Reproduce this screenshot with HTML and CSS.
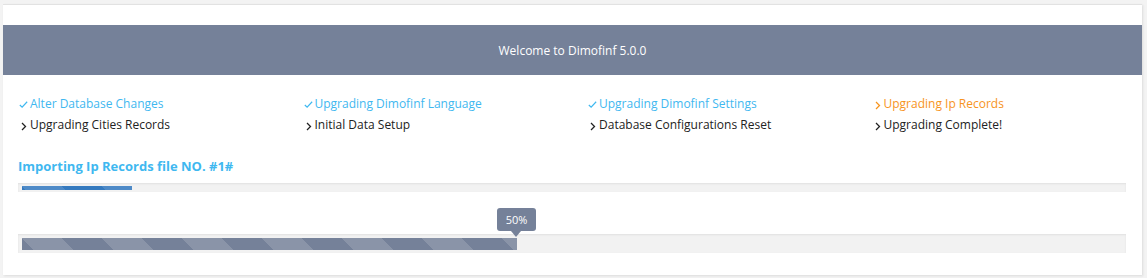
FILE: index.html
```html
<!DOCTYPE html>
<html lang="en">

<head>
    <meta charset="UTF-8">
    <title>Dimofinf Upgrade</title>
    <link rel="stylesheet" href="styles.css">
</head>

<body>
    <section class="panel">
        <header class="panel_head">
            <h2>Welcome to Dimofinf 5.0.0</h2>
        </header>

        <div class="panel_body">
            <ul class="steps">
                <li class="done"><svg class="ico" viewBox="0 0 12 12"><path d="M2 6.5 L4.5 9 L10 3"/></svg>Alter Database Changes</li>
                <li class="done"><svg class="ico" viewBox="0 0 12 12"><path d="M2 6.5 L4.5 9 L10 3"/></svg>Upgrading Dimofinf Language</li>
                <li class="done"><svg class="ico" viewBox="0 0 12 12"><path d="M2 6.5 L4.5 9 L10 3"/></svg>Upgrading Dimofinf Settings</li>
                <li class="current"><svg class="ico" viewBox="0 0 12 12"><path d="M4 3 L7.5 6.5 L4 10"/></svg>Upgrading Ip Records</li>
                <li><svg class="ico" viewBox="0 0 12 12"><path d="M4 3 L7.5 6.5 L4 10"/></svg>Upgrading Cities Records</li>
                <li><svg class="ico" viewBox="0 0 12 12"><path d="M4 3 L7.5 6.5 L4 10"/></svg>Initial Data Setup</li>
                <li><svg class="ico" viewBox="0 0 12 12"><path d="M4 3 L7.5 6.5 L4 10"/></svg>Database Configurations Reset</li>
                <li><svg class="ico" viewBox="0 0 12 12"><path d="M4 3 L7.5 6.5 L4 10"/></svg>Upgrading Complete!</li>
            </ul>

            <h3 class="task">Importing Ip Records file NO. #1#</h3>

            <div class="bar bar_small">
                <div class="fill fill_blue" style="width: 10%"></div>
            </div>

            <div class="bar bar_big">
                <div class="fill fill_grey" style="width: 45%">
                    <span class="tip">50%</span>
                </div>
            </div>
        </div>
    </section>
</body>

</html>
```

FILE: styles.css
```css
body {
    margin: 0;
    background-color: #f3f3f3;
    font-family: "Open Sans", "Liberation Sans", sans-serif;
    width: 1147px;
    height: 278px;
    overflow: hidden;
}

.panel {
    margin: 4px 5px 0 3px;
    height: 271px;
    background: #fff;
    border-top: 1px solid #e2e2e2;
    box-shadow: 1px 1px 2px #dcdcdc;
    box-sizing: border-box;
    padding-top: 20px;
}

.panel_head {
    background: #758199;
    height: 50px;
    display: flex;
    align-items: center;
    justify-content: center;
}

.panel_head h2 {
    margin: 0;
    font-size: 12px;
    font-weight: normal;
    color: #fff;
}

.panel_body {
    padding: 20px 15px 0 15px;
}

.steps {
    list-style: none;
    margin: 0;
    padding: 0;
    display: grid;
    grid-template-columns: repeat(4, 284.5px);
    row-gap: 3px;
    font-size: 12px;
    line-height: 18px;
    color: #222;
}

.steps li {
    display: flex;
    align-items: center;
}

.steps .ico {
    width: 12px;
    height: 12px;
    margin-top: 1px;
    fill: none;
    stroke: #222;
    stroke-width: 1.3;
}

.steps .done {
    color: #3fb8f0;
}

.steps .done .ico {
    stroke: #3fb8f0;
    width: 11px;
    height: 11px;
    margin-right: 1px;
}

.steps .current {
    color: #f7941d;
}

.steps .current .ico {
    stroke: #f7941d;
}

.task {
    margin: 23px 0 0 0;
    font-size: 13px;
    font-weight: bold;
    color: #3fb8f0;
    line-height: 18px;
}

.bar {
    width: 1108px;
    background: #f2f2f2;
    box-shadow: inset 0 1px 2px #e0e0e0;
    box-sizing: border-box;
    padding: 3px 4px;
}

.bar_small {
    margin-top: 8px;
    height: 9px;
    padding: 3px 4px 2px 4px;
}

.bar_big {
    margin-top: 42px;
    height: 19px;
    padding: 4px 4px 3px 4px;
}

.fill {
    height: 100%;
    position: relative;
    background-size: 80px 80px;
}

.fill_blue {
    background-color: #357abf;
    background-image: linear-gradient(45deg, rgba(255, 255, 255, 0.12) 25%, transparent 25%, transparent 50%, rgba(255, 255, 255, 0.12) 50%, rgba(255, 255, 255, 0.12) 75%, transparent 75%, transparent);
}

.fill_grey {
    background-color: #758199;
    background-image: linear-gradient(45deg, rgba(255, 255, 255, 0.15) 25%, transparent 25%, transparent 50%, rgba(255, 255, 255, 0.15) 50%, rgba(255, 255, 255, 0.15) 75%, transparent 75%, transparent);
}

.tip {
    position: absolute;
    right: -19px;
    bottom: 19px;
    width: 39px;
    height: 23px;
    line-height: 23px;
    background: #758199;
    color: #fff;
    border-radius: 3px;
    font-size: 11px;
    text-align: center;
}

.tip::after {
    content: "";
    position: absolute;
    left: 14px;
    bottom: -6px;
    border-left: 5px solid transparent;
    border-right: 5px solid transparent;
    border-top: 6px solid #758199;
}
```
